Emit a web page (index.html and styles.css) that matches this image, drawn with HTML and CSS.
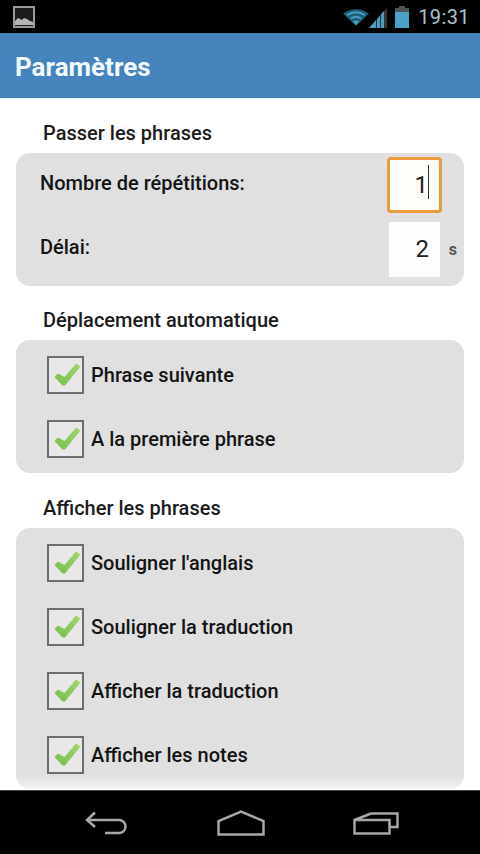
FILE: index.html
```html
<!DOCTYPE html>
<html lang="fr">
<head>
<meta charset="utf-8">
<title>Paramètres</title>
<link rel="stylesheet" href="styles.css">
</head>
<body>
<svg class="defs" width="0" height="0" aria-hidden="true">
  <defs>
    <linearGradient id="tick-fill" x1="0" y1="1" x2="1" y2="0">
      <stop offset="0" stop-color="#74bf4b"/>
      <stop offset="1" stop-color="#a2d673"/>
    </linearGradient>
    <symbol id="tick" viewBox="0 0 30 26">
      <path d="M3.500 15L7 11.500l6.500 3.500L25 1.500l4.500 3L14 23.500h-2.500z" fill="url(#tick-fill)"/>
    </symbol>
  </defs>
</svg>
<div class="screen">
  <div class="statusbar">
    <svg class="pic-icon" width="24" height="24" viewBox="0 0 24 24"><rect x="2" y="2" width="20" height="20" fill="#1a1a1a" stroke="#9a9a9a" stroke-width="2"/><path d="M3 20v-4l3-3 2 1 2 1 2-2 3 1 3 2 3 1v3z" fill="#b5b5b5"/></svg>
    <div class="status-right">
      <svg width="44" height="24" viewBox="0 0 44 24"><path d="M0 8.500Q13 0 26 8.500L13 21z" fill="#1d5f78"/><path d="M4 10Q13 4.500 22 10M8 13.500Q13 10 18 13.500" fill="none" stroke="#4a9fc0" stroke-width="2"/><path d="M13 20l-3-3.500q3-2 6 0z" fill="#4a9fc0"/><path d="M26 23L44 3v20z" fill="#333"/><path d="M26 23l7-8v8zM34 23V14l3-3.500V23z" fill="#4a9dbf"/><path d="M38 23V9l3-3v17z" fill="#4a9dbf"/></svg>
      <svg class="battery" width="14" height="22" viewBox="0 0 14 22"><path d="M4 0h6v2h4v20H0V2h4z" fill="#4c5557"/><rect y="6" width="14" height="16" fill="#4ba0c9"/></svg>
      <span class="clock">19:31</span>
    </div>
  </div>
  <header class="appbar"><h1 class="app-title">Paramètres</h1></header>
  <main class="content">
    <h2 class="section-title">Passer les phrases</h2>
    <section class="panel panel-fields">
      <div class="field-row">
        <span class="label">Nombre de répétitions:</span>
        <div class="input input-focus"><span class="value">1</span><span class="caret"></span></div>
      </div>
      <div class="field-row">
        <span class="label">Délai:</span>
        <div class="input"><span class="value">2</span></div>
        <span class="unit">s</span>
      </div>
    </section>

    <h2 class="section-title">Déplacement automatique</h2>
    <section class="panel panel-checks">
      <div class="check-row"><span class="checkbox"><svg class="tick" viewBox="0 0 30 26"><use href="#tick"/></svg></span><span class="label">Phrase suivante</span></div>
      <div class="check-row"><span class="checkbox"><svg class="tick" viewBox="0 0 30 26"><use href="#tick"/></svg></span><span class="label">A la première phrase</span></div>
    </section>

    <h2 class="section-title">Afficher les phrases</h2>
    <section class="panel panel-checks panel-fade">
      <div class="check-row"><span class="checkbox"><svg class="tick" viewBox="0 0 30 26"><use href="#tick"/></svg></span><span class="label">Souligner l'anglais</span></div>
      <div class="check-row"><span class="checkbox"><svg class="tick" viewBox="0 0 30 26"><use href="#tick"/></svg></span><span class="label">Souligner la traduction</span></div>
      <div class="check-row"><span class="checkbox"><svg class="tick" viewBox="0 0 30 26"><use href="#tick"/></svg></span><span class="label">Afficher la traduction</span></div>
      <div class="check-row"><span class="checkbox"><svg class="tick" viewBox="0 0 30 26"><use href="#tick"/></svg></span><span class="label">Afficher les notes</span></div>
    </section>
  </main>
  <nav class="navbar">
    <svg width="44" height="24" viewBox="0 0 44 24"><path d="M10 1.500L2 9l8 7M2 9h32a6.500 6.500 0 0 1 0 13H20" fill="none" stroke="#a8a8a8" stroke-width="2.500"/></svg>
    <svg width="48" height="26" viewBox="0 0 48 26"><path d="M1.500 24.500V11L24 1.500 46.500 11v13.500z" fill="none" stroke="#a8a8a8" stroke-width="2.500"/></svg>
    <svg width="46" height="24" viewBox="0 0 46 24"><path d="M1.500 9h35v13.500h-35zM1.500 9L18 2.500h26.500V16H37" fill="none" stroke="#a8a8a8" stroke-width="2.500"/></svg>
    <div class="menu-dots"><span></span><span></span><span></span></div>
  </nav>
</div>
</body>
</html>
```
FILE: styles.css
```css
* { box-sizing: border-box; }
html, body { margin: 0; padding: 0; }
body { font-family: Roboto, "Liberation Sans", sans-serif; background: #fff; }
.defs { position: absolute; }
.screen { width: 480px; height: 854px; display: flex; flex-direction: column; overflow: hidden; }
.statusbar { height: 33px; background: #000; display: flex; align-items: center; justify-content: space-between; padding: 0 10px 0 12px; flex: none; }
.pic-icon { display: block; }
.status-right { display: flex; align-items: center; gap: 8px; }
.status-right svg { display: block; }
.clock { color: #a9c4cc; font-size: 20px; margin-left: 1px; letter-spacing: .4px; }
.appbar { height: 65px; background: #4583bd; display: flex; align-items: center; padding: 4px 15px 0; flex: none; border-bottom: 1px solid #4a7fae; box-shadow: 0 1px 0 #e4f4fb; }
.app-title { margin: 0; color: #f2fbff; font-size: 26px; font-weight: 700; }
.content { flex: 1; min-height: 0; overflow: hidden; padding: 24px 16px 0; }
.section-title { margin: 0 0 8px 27px; height: 23px; line-height: 23px; font-size: 20px; font-weight: 500; color: #1b1b1b; }
.panel { background: #e0e0e0; border-radius: 14px; margin-bottom: 23px; }
.panel-fade { background: linear-gradient(#e0e0e0 calc(100% - 14px), #f4f4f4); }
.panel-fields { height: 133px; padding: 0 7px 0 24px; }
.field-row { display: flex; align-items: center; height: 64px; }
.label { font-size: 20px; font-weight: 500; color: #141414; }
.field-row .label { flex: 1; margin-bottom: 4px; }
.input { width: 51px; height: 55px; background: #fdfdfd; display: flex; align-items: center; justify-content: flex-end; padding-right: 11px; color: #222; font-size: 24px; }
.input-focus { width: 55px; height: 56px; margin-right: 15px; border: 3px solid #ec9a3f; border-radius: 4px; background: #fffdf8; padding-right: 11px; position: relative; }
.caret { position: absolute; right: 10px; top: 5px; width: 1px; height: 34px; background: #333; }
.unit { width: 17px; text-align: right; font-size: 16px; font-weight: 700; color: #555; }
.panel-checks { padding: 3px 0 2px 31px; margin-bottom: 24px; }
.check-row { display: flex; align-items: center; height: 64px; gap: 7px; }
.checkbox { width: 37px; height: 38px; border: 2px solid #6d6d6d; background: #e8e8e8; display: flex; align-items: center; justify-content: center; flex: none; }
.tick { display: block; width: 30px; height: 26px; }
.navbar { height: 64px; background: #000; flex: none; border-top: 1px solid #444; display: flex; align-items: center; gap: 88px; padding: 0 23px 0 85px; }
.navbar svg { display: block; flex: none; }
.menu-dots { display: flex; flex-direction: column; gap: 4px; margin-left: auto; }
.menu-dots span { width: 5px; height: 5px; background: #a8a8a8; }
```
